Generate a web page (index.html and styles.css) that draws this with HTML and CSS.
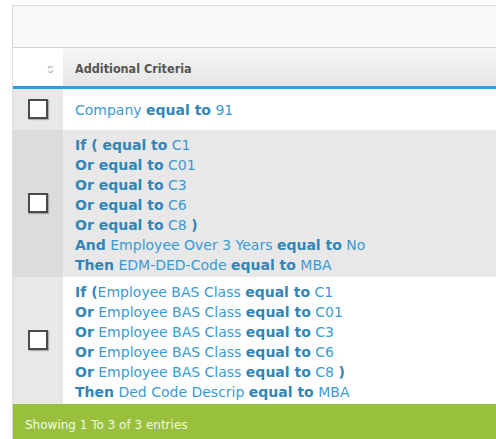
FILE: index.html
```html
<!DOCTYPE html>
<html>
<head>
<meta charset="utf-8">
<link rel="stylesheet" href="styles.css">
</head>
<body>
<div class="panel">
  <div class="toolbar"></div>
  <table class="grid">
    <thead>
      <tr>
        <th class="col-check">
          <svg class="sort-icon" width="7" height="7" viewBox="0 0 7 7">
            <path d="M1 2.6 A2.6 2.6 0 0 1 5.6 1.6" fill="none" stroke="#b8b8b8" stroke-width="1.2"/>
            <path d="M6 4.4 A2.6 2.6 0 0 1 1.4 5.4" fill="none" stroke="#b8b8b8" stroke-width="1.2"/>
          </svg>
        </th>
        <th class="col-text">Additional Criteria</th>
      </tr>
    </thead>
    <tbody>
      <tr class="row-odd">
        <td class="col-check"><span class="box"></span></td>
        <td class="col-text single">Company <b>equal to</b> 91</td>
      </tr>
      <tr class="row-even">
        <td class="col-check"><span class="box"></span></td>
        <td class="col-text">
          <div><b>If ( equal to</b> C1</div>
          <div><b>Or equal to</b> C01</div>
          <div><b>Or equal to</b> C3</div>
          <div><b>Or equal to</b> C6</div>
          <div><b>Or equal to</b> C8 <b>)</b></div>
          <div><b>And</b> Employee Over 3 Years <b>equal to</b> No</div>
          <div><b>Then</b> EDM-DED-Code <b>equal to</b> MBA</div>
        </td>
      </tr>
      <tr class="row-odd">
        <td class="col-check"><span class="box"></span></td>
        <td class="col-text">
          <div><b>If (</b>Employee BAS Class <b>equal to</b> C1</div>
          <div><b>Or</b> Employee BAS Class <b>equal to</b> C01</div>
          <div><b>Or</b> Employee BAS Class <b>equal to</b> C3</div>
          <div><b>Or</b> Employee BAS Class <b>equal to</b> C6</div>
          <div><b>Or</b> Employee BAS Class <b>equal to</b> C8 <b>)</b></div>
          <div><b>Then</b> Ded Code Descrip <b>equal to</b> MBA</div>
        </td>
      </tr>
    </tbody>
  </table>
  <div class="footer">Showing 1 To 3 of 3 entries</div>
</div>
</body>
</html>
```

FILE: styles.css
```css
html, body {
  margin: 0;
  padding: 0;
  background: #ffffff;
}

body {
  font-family: "DejaVu Sans", sans-serif;
}

.panel {
  margin: 5px 0 0 12px;
  border-top: 1px solid #dcdcdc;
  border-left: 1px solid #dcdcdc;
  width: 600px;
}

.toolbar {
  height: 41px;
  background: #f8f8f8;
  border-bottom: 1px solid #d2d2d2;
}

.grid {
  border-collapse: collapse;
  border-spacing: 0;
  width: 100%;
}

.grid th {
  height: 36px;
  padding: 2px 0 0 0;
  border-bottom: 3px solid #2b9de4;
  text-align: left;
  vertical-align: middle;
  font-family: "DejaVu Sans Condensed", "DejaVu Sans", sans-serif;
  font-size: 12.5px;
  font-weight: bold;
  color: #555555;
}

.grid th.col-check {
  background: #ffffff;
  text-align: right;
  padding-right: 9px;
}

.grid th.col-text {
  background: linear-gradient(#f6f6f6, #e5e5e5);
  padding-left: 12px;
}

.sort-icon {
  display: inline-block;
  vertical-align: middle;
}

.col-check {
  width: 50px;
  box-sizing: border-box;
}

.grid td {
  padding: 0;
}

.grid td.col-check {
  text-align: center;
  vertical-align: middle;
  padding: 10px 0 11px 0;
  line-height: 0;
}

.grid td.col-text {
  padding: 5px 12px 2px 12px;
  font-size: 14px;
  line-height: 20px;
  color: #3b9ad1;
  vertical-align: middle;
  white-space: nowrap;
}

.grid td.col-text.single {
  padding-top: 1px;
  padding-bottom: 0;
}

.grid td.col-text b {
  color: #3186b7;
  font-weight: bold;
}

.row-odd td.col-check {
  background: #e8e8e8;
}

.row-odd td.col-text {
  background: #ffffff;
}

.row-even td.col-check {
  background: #dcdcdc;
}

.row-even td.col-text {
  background: #e8e8e8;
}

.box {
  display: inline-block;
  width: 16px;
  height: 16px;
  border: 2px solid #4a4a4a;
  background: #ffffff;
  box-shadow: 1px 1px 1px rgba(0, 0, 0, 0.25);
  margin-left: -1px;
}

.footer {
  background: #98c03c;
  color: #f3f8e6;
  font-size: 12px;
  line-height: 16px;
  padding: 13px 12px 10px 12px;
}
```
